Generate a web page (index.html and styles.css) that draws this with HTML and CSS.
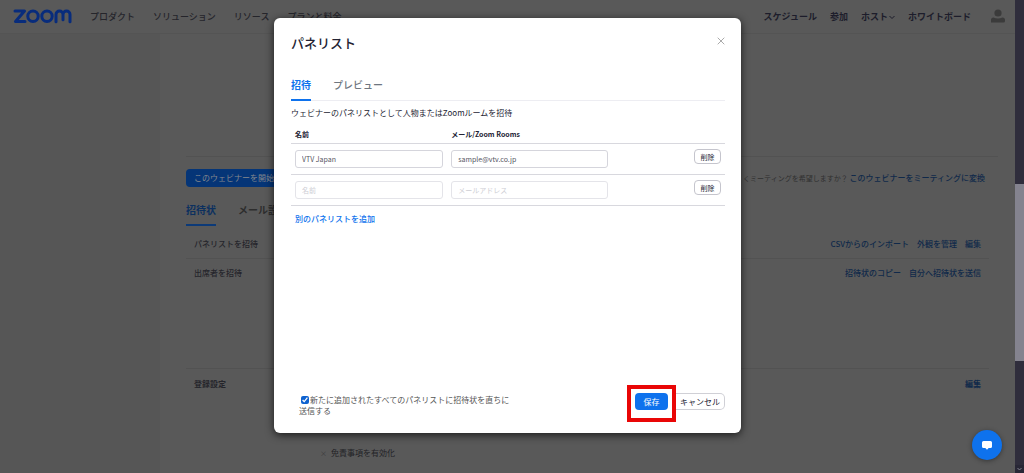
FILE: index.html
```html
<!DOCTYPE html>
<html lang="ja">
<head>
<meta charset="utf-8">
<meta name="viewport" content="width=device-width, initial-scale=1">
<title>パネリスト</title>
<link rel="stylesheet" href="styles.css">
</head>
<body>
<div class="app">
  <div class="page">
    <header class="topbar">
      <a class="logo" href="#" aria-label="Zoom">
        <svg width="59" height="15" viewBox="0 0 59 15" fill="none" stroke="currentColor" stroke-width="3" stroke-linecap="round" stroke-linejoin="round">
          <path d="M2 2h9.500L2.500 12.500H12"/>
          <circle cx="20" cy="7.300" r="5.200"/>
          <circle cx="34" cy="7.300" r="5.200"/>
          <path d="M43 12.700V5.500a3.500 3.500 0 0 1 7 0v5.200M50 5.500a3.500 3.500 0 0 1 7 0v7.200"/>
        </svg>
      </a>
      <nav class="nav">
        <a href="#">プロダクト</a><a href="#">ソリューション</a><a href="#">リソース</a><a href="#">プランと料金</a>
      </nav>
      <nav class="nav nav-user">
        <a href="#">スケジュール</a><a href="#">参加</a>
        <a href="#">ホスト<svg width="6" height="5" viewBox="0 0 6 5" fill="none" stroke="currentColor"><path d="M.5 1 3 3.500 5.500 1"/></svg></a>
        <a href="#">ホワイトボード</a>
      </nav>
      <a class="avatar" href="#" aria-label="プロフィール">
        <svg width="16" height="16" viewBox="0 0 16 16" fill="currentColor"><circle cx="8" cy="4" r="3.600"/><path d="M1 13.500V11q0-2.500 2.500-2.500Q8 10.500 12.500 8.500 15 8.500 15 11v1q0 1.500-1.500 1.500z"/></svg>
      </a>
    </header>
    <div class="body">
      <aside class="side"></aside>
      <main class="content">
        <div class="spacer-top"></div>
        <div class="start-row">
          <button class="start" type="button">このウェビナーを開始</button>
          <p class="convert"><span>くミーティングを希望しますか？</span> <a href="#">このウェビナーをミーティングに変換</a></p>
        </div>
        <div class="page-tabs">
          <a class="active" href="#">招待状</a><a href="#">メール設定</a>
        </div>
        <section class="setting">
          <h2>パネリストを招待</h2>
          <div class="links"><a href="#">CSVからのインポート</a><a href="#">外観を管理</a><a href="#">編集</a></div>
        </section>
        <section class="setting tall">
          <h2>出席者を招待</h2>
          <div class="links"><a href="#">招待状のコピー</a><a href="#">自分へ招待状を送信</a></div>
        </section>
        <section class="setting last">
          <h2>登録設定</h2>
          <div class="links"><a href="#">編集</a></div>
        </section>
        <p class="option"><span class="bullet">×</span>免責事項を有効化</p>
      </main>
    </div>

    <div class="overlay">
      <div class="dialog" role="dialog" aria-labelledby="dialog-title">
        <div class="dialog-head">
          <h1 id="dialog-title">パネリスト</h1>
          <button class="close" type="button" aria-label="閉じる">
            <svg width="8" height="8" viewBox="0 0 8 8" stroke="currentColor"><path d="M.7.7l6.600 6.600M7.300.7.7 7.300"/></svg>
          </button>
        </div>
        <div class="tabs"><a class="active" href="#">招待</a><a href="#">プレビュー</a></div>
        <p class="intro">ウェビナーのパネリストとして人物またはZoomルームを招待</p>
        <table class="panelists">
          <thead><tr><th class="col-name">名前</th><th class="col-mail">メール/Zoom Rooms</th><th class="col-action"></th></tr></thead>
          <tbody>
            <tr>
              <td><input type="text" aria-label="名前" placeholder="名前" value="VTV Japan"></td>
              <td><input type="text" aria-label="メール" placeholder="メールアドレス" value="sample@vtv.co.jp"></td>
              <td class="action"><button class="delete" type="button">削除</button></td>
            </tr>
            <tr class="empty">
              <td><input type="text" aria-label="名前" placeholder="名前"></td>
              <td><input type="text" aria-label="メール" placeholder="メールアドレス"></td>
              <td class="action"><button class="delete" type="button">削除</button></td>
            </tr>
          </tbody>
        </table>
        <a class="add" href="#">別のパネリストを追加</a>
        <div class="dialog-foot">
          <label class="notify" for="notify"><input id="notify" type="checkbox" checked>新たに追加されたすべてのパネリストに招待状を直ちに送信する</label>
          <div class="buttons">
            <span class="highlight"><button class="save" type="button">保存</button></span>
            <button class="cancel" type="button">キャンセル</button>
          </div>
        </div>
      </div>
    </div>

    <button class="chat" type="button" aria-label="チャット">
      <svg width="12" height="11" viewBox="0 0 12 11" fill="#fff"><path d="M2.500 1h7Q11 1 11 2.500v4Q11 8 9.500 8H7.700L6 9.800 4.300 8H2.500Q1 8 1 6.500v-4Q1 1 2.500 1z"/></svg>
    </button>
  </div>
  <div class="scrollbar">
    <div class="thumb"></div>
    <svg class="arrow" width="9" height="8" viewBox="0 0 9 8" fill="none" stroke="#858390"><path d="M2.500 3l2 2 2-2"/></svg>
  </div>
</div>
</body>
</html>
```

FILE: styles.css
```css
* { box-sizing: border-box; }
body {
  margin: 0;
  font: 8px/12px "Noto Sans CJK JP", "Noto Sans", sans-serif;
  color: #2b2b31;
}
h1, h2, p { margin: 0; }
a { color: inherit; text-decoration: none; }
button, input { font: inherit; }
button { padding: 0; cursor: pointer; }

.app { display: flex; height: 100vh; overflow: hidden; background: #595959; }
.page { position: relative; flex: 1; min-width: 0; display: flex; flex-direction: column; }

.topbar {
  display: flex;
  align-items: center;
  height: 34px;
  padding: 0 9px 0 13px;
  border-bottom: 1px solid #545454;
}
.logo { color: #082c7c; width: 77px; }
.logo svg { display: block; }
.nav { display: flex; gap: 18px; font-size: 9px; font-weight: 500; color: #25252b; white-space: nowrap; }
.nav-user { margin-left: auto; gap: 13px; font-weight: 700; color: #1d1d2b; }
.nav svg { margin-left: 1px; }
.avatar { display: flex; color: #3b3b3b; margin-left: 19px; }

.body { display: flex; flex: 1; min-height: 0; }
.side { width: 160px; background: #565656; }
.content { flex: 1; min-width: 0; padding: 0 17px 0 26px; }
.spacer-top { height: 123px; border-bottom: 1px solid #525252; }
.start-row { display: flex; justify-content: space-between; align-items: center; margin: 12px 13px 0 0; }
.start {
  height: 18px;
  padding: 0 8px;
  border: 0;
  border-radius: 4px;
  background: #053577;
  color: #84888e;
}
.convert { white-space: nowrap; }
.convert span { font-size: 7px; color: #303030; }
.convert a, .links a { color: #10294a; font-weight: 500; }
.page-tabs {
  display: flex;
  gap: 22px;
  margin-top: 14px;
  font-size: 10px;
  line-height: 18px;
  font-weight: 700;
  color: #2d2d2d;
}
.page-tabs a { padding-bottom: 5px; border-bottom: 2px solid transparent; }
.page-tabs .active { color: #0c305f; border-color: #0c3a78; }
.setting {
  display: flex;
  justify-content: space-between;
  align-items: flex-start;
  margin-right: 9px;
  padding: 12px 8px 8px;
  border-bottom: 1px solid #525252;
}
.setting h2 { font-size: 8px; font-weight: 500; color: #25252b; }
.links { display: flex; gap: 8px; }
.tall { min-height: 110px; padding-top: 8px; }
.last { padding-top: 9px; border: 0; min-height: 78px; }
.last h2, .last a { font-weight: 700; }
.option { padding-left: 134px; color: #222226; }
.bullet { margin-right: 4px; color: #3a3a3a; font-size: 7px; }

.overlay {
  position: absolute;
  inset: 0;
  display: flex;
  justify-content: center;
  align-items: flex-start;
  padding: 18px 0;
}
.dialog {
  display: flex;
  flex-direction: column;
  width: 46%;
  min-width: 440px;
  min-height: 415px;
  padding: 14px 16px 11px 17px;
  border-radius: 6px;
  background: #fff;
  box-shadow: 0 2px 8px rgba(0, 0, 0, .7);
}
.dialog-head { display: flex; justify-content: space-between; align-items: flex-start; }
.dialog h1 { font-size: 13px; line-height: 22px; font-weight: 500; color: #232333; }
.close { display: flex; justify-content: flex-end; align-items: center; width: 12px; height: 18px; border: 0; background: none; color: #aaa; }
.tabs {
  display: flex;
  gap: 22px;
  margin-top: 22px;
  border-bottom: 1px solid #ededf2;
  font-size: 10px;
  line-height: 18px;
  font-weight: 500;
  color: #6e7680;
}
.tabs a { margin-bottom: -1px; padding-bottom: 5px; border-bottom: 2px solid transparent; }
.tabs .active { color: #0e72ed; border-color: #0e72ed; font-weight: 700; }
.intro { margin-top: 6px; color: #232333; }

.panelists { width: 100%; margin-top: 8px; border-collapse: collapse; table-layout: fixed; }
.col-name { width: 36%; }
.col-mail { width: 38%; }
.panelists th { padding: 1px 4px 3px; font-size: 7px; line-height: 12px; text-align: left; color: #232333; }
.panelists tr { border-bottom: 1px solid #d8d8de; }
.panelists td { height: 31px; padding: 0 4px; vertical-align: middle; }
.panelists input {
  display: block;
  width: 100%;
  height: 18px;
  padding: 0 6px;
  border: 1px solid #d5d5dc;
  border-radius: 3px;
  background: #fff;
  font-size: 7px;
  color: #55555f;
  outline: 0;
}
.panelists .empty input { border-color: #e4e4e9; }
.panelists input::placeholder { color: #ceced4; }
.panelists .action { padding-top: 5px; text-align: right; vertical-align: top; }
.delete {
  width: 27px;
  height: 15px;
  border: 1px solid #c5c5cd;
  border-radius: 4px;
  background: #fff;
  color: #232333;
  font-size: 7px;
  line-height: 12px;
}
.add { margin: 7px 4px 0; color: #0e72ed; font-weight: 500; align-self: flex-start; }

.dialog-foot { display: flex; justify-content: space-between; align-items: center; margin-top: auto; }
.notify { width: 220px; padding: 2px 0 0 8px; line-height: 11px; color: #555; }
.notify input { width: 8px; height: 8px; margin: 0 1px 0 2px; vertical-align: -1px; accent-color: #0e62d0; }
.buttons { display: flex; align-items: flex-start; }
.highlight { display: flex; padding: 4px 4px 8px; border: 4px solid #e90606; }
.save { width: 33px; height: 17px; border: 0; border-radius: 4px; background: #0e72ed; color: #fff; line-height: 12px; }
.cancel {
  width: 49px;
  height: 17px;
  margin-top: 8px;
  border: 1px solid #d0d0d6;
  border-left: 0;
  border-radius: 0 5px 5px 0;
  background: #fff;
  color: #232333;
  line-height: 12px;
}

.chat {
  position: absolute;
  right: 13px;
  bottom: 13px;
  display: flex;
  align-items: center;
  justify-content: center;
  width: 30px;
  height: 30px;
  border: 0;
  border-radius: 50%;
  background: #0e72ed;
  box-shadow: 0 1px 5px rgba(0, 0, 0, .4);
}

.scrollbar { display: flex; flex-direction: column; width: 9px; padding-top: 184px; background: #2f2d3c; }
.thumb { height: 177px; background: #84838f; }
.arrow { margin-top: auto; background: #282736; }
```
